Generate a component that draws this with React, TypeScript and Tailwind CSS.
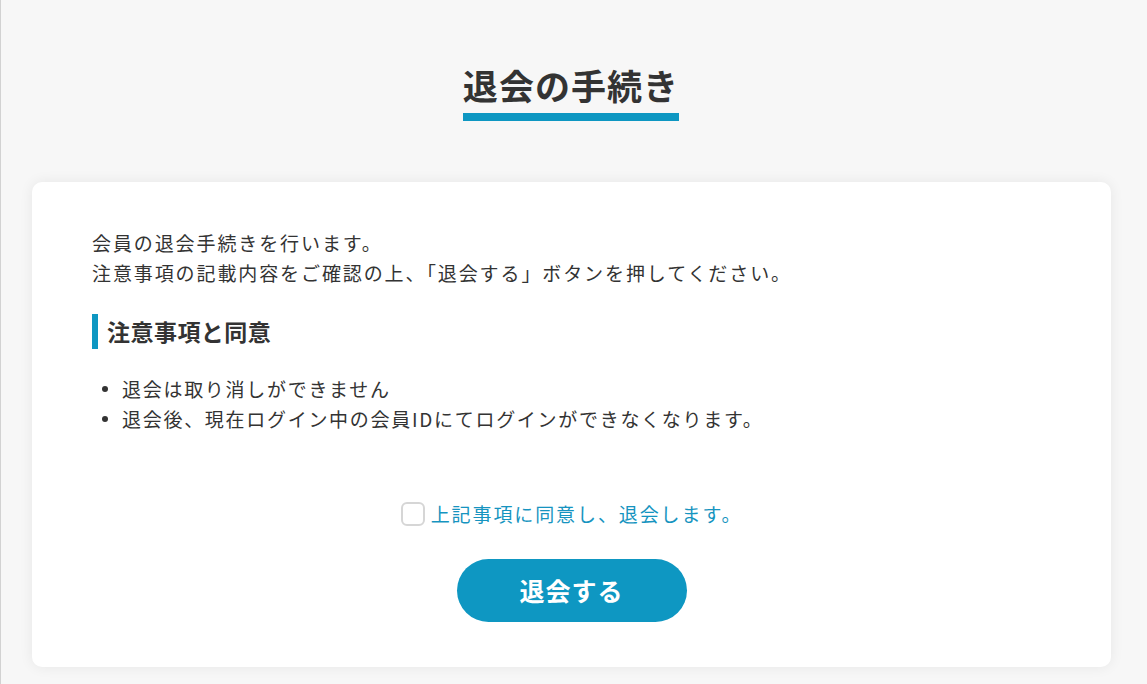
import { useState } from 'react'

const notes = [
  '退会は取り消しができません',
  '退会後、現在ログイン中の会員IDにてログインができなくなります。',
]

export default function App() {
  const [agreed, setAgreed] = useState(false)

  return (
    <div
      className="min-h-screen border-l border-[#d2d2d2] bg-[#f7f7f7] pt-[61px] pb-[17px] text-[#333333]"
      style={{ fontFamily: '"Noto Sans CJK JP", "Noto Sans", sans-serif' }}
    >
      <div className="pr-[6px] text-center">
        <h1 className="inline-block border-b-8 border-[#0e97c2] pb-[4px] text-[35px] font-bold leading-[48px] tracking-[0.03em]">
          退会の手続き
        </h1>
      </div>

      <section className="mt-[61px] ml-[31px] mr-[36px] rounded-[10px] bg-white px-[60px] pt-[46px] pb-[45px] shadow-[0_0_14px_rgba(0,0,0,0.07)]">
        <p className="text-[19px] leading-[30px] tracking-[0.1em]">
          会員の退会手続きを行います。
          <br />
          注意事項の記載内容をご確認の上、「退会する」ボタンを押してください。
        </p>

        <h2 className="mt-[26px] border-l-[6px] border-[#0e97c2] pl-[9px] text-[23px] font-bold leading-[35px] tracking-[0.02em]">
          注意事項と同意
        </h2>

        <ul className="mt-[25px] text-[19px] leading-[30px] tracking-[0.09em]">
          {notes.map((note) => (
            <li key={note} className="flex items-center">
              <span className="ml-[10px] mr-[14px] h-[6px] w-[6px] shrink-0 rounded-full bg-[#333333]" />
              {note}
            </li>
          ))}
        </ul>

        <label className="mt-[65px] flex cursor-pointer items-center justify-center gap-[6px] text-[19px] leading-[30px] tracking-[0.1em] text-[#1694c0]">
          <input
            type="checkbox"
            checked={agreed}
            onChange={(e) => setAgreed(e.target.checked)}
            className="h-[24px] w-[24px] appearance-none rounded-[6px] border-2 border-[#d6d6d6] bg-white checked:border-[#0e97c2] checked:bg-[#0e97c2]"
          />
          上記事項に同意し、退会します。
        </label>

        <div className="mt-[30px] flex justify-center">
          <button
            type="button"
            className="h-[63px] w-[230px] rounded-full bg-[#0e97c2] text-[25px] font-bold tracking-[0.04em] text-white"
          >
            退会する
          </button>
        </div>
      </section>
    </div>
  )
}
